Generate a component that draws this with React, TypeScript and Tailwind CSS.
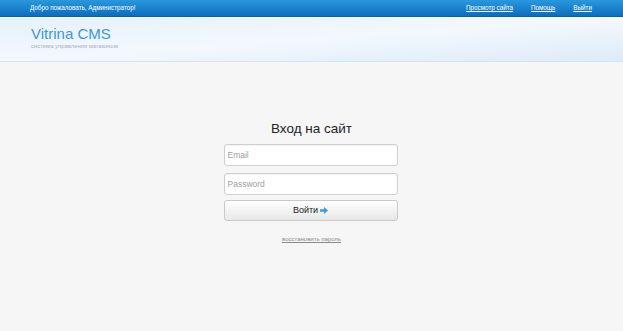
export default function App() {
  return (
    <div
      className="min-h-screen bg-[#f6f6f6] text-[#222]"
      style={{ fontFamily: '"Liberation Sans", Arial, sans-serif' }}
    >
      {/* Top bar */}
      <div className="h-[17px] bg-gradient-to-b from-[#2a98dc] to-[#0b6dbd] flex items-center px-[30px] text-[6.3px] text-white border-b border-[#0a5fa6]">
        <span>Добро пожаловать, Администратор!</span>
        <div className="ml-auto flex gap-[18px] pr-[1px]">
          <a href="#" className="underline">Просмотр сайта</a>
          <a href="#" className="underline">Помощь</a>
          <a href="#" className="underline">Выйти</a>
        </div>
      </div>

      {/* Header */}
      <div className="h-[45px] border-t border-white border-b border-b-[#d3e4f2] bg-gradient-to-br from-[#e6f1fb] via-[#f3f8fd] to-[#dcebf8] px-[31px] pt-[8px]">
        <div className="text-[15px] leading-[16px] text-[#3a98d8]">Vitrina CMS</div>
        <div className="text-[5.9px] leading-[9px] text-[#a6b2bd]">система управления магазином</div>
      </div>

      {/* Login */}
      <div className="flex flex-col items-center pt-[57px]">
        <h1 className="text-[13.5px] leading-[20px] mb-[5px]">Вход на сайт</h1>
        <div className="w-[174px] -translate-x-[1px] flex flex-col">
          <input
            placeholder="Email"
            className="h-[22px] rounded-[3px] border border-[#cfcfcf] bg-white px-[3px] text-[8.5px] placeholder-[#a0a0a0] outline-none shadow-[inset_0_1px_1px_rgba(0,0,0,0.05)]"
          />
          <input
            placeholder="Password"
            className="mt-[7px] h-[22px] rounded-[3px] border border-[#cfcfcf] bg-white px-[3px] text-[8.5px] placeholder-[#a0a0a0] outline-none shadow-[inset_0_1px_1px_rgba(0,0,0,0.05)]"
          />
          <button className="mt-[5px] h-[21px] rounded-[3px] border border-[#c8c8c8] bg-gradient-to-b from-white to-[#e8e8e8] flex items-center justify-center gap-[2px] text-[9px] text-[#222]">
            Войти
            <svg width="8" height="7" viewBox="0 0 8 7">
              <path d="M0 2.3h4V0l4 3.5L4 7V4.7H0z" fill="#3b9be0" />
            </svg>
          </button>
        </div>
        <a href="#" className="mt-[14px] text-[6px] text-[#8a8a8a] underline">восстановить пароль</a>
      </div>
    </div>
  );
}
